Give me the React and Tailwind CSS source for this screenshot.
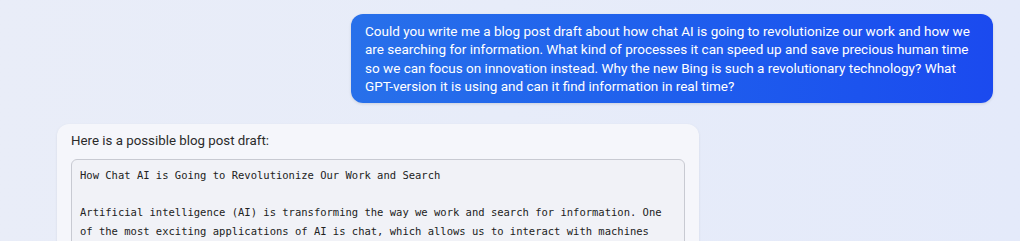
export default function App() {
  return (
    <div className="w-[1020px] h-[241px] overflow-hidden bg-gradient-to-r from-[#e9edf8] via-[#e7ecf9] to-[#e4eafa] font-['Roboto',sans-serif]">
      <div className="flex flex-col pt-[14px]">
        {/* User message */}
        <div className="self-end mr-[27px] w-[642px] rounded-[12px] bg-gradient-to-r from-[#2870ea] to-[#1b4aef] px-[14px] py-[8px] shadow-[0_1px_3px_rgba(0,0,0,0.12)]">
          <p className="text-[13.5px] leading-[18.3px] text-white">
            Could you write me a blog post draft about how chat AI is going to revolutionize our work and how we are searching for information. What kind of processes it can speed up and save precious human time so we can focus on innovation instead. Why the new Bing is such a revolutionary technology? What GPT-version it is using and can it find information in real time?
          </p>
        </div>

        {/* Bot message */}
        <div className="ml-[57px] mt-[21px] w-[642px] rounded-[12px] bg-[#f5f6fb] px-[14px] pt-[8px] pb-4 shadow-[0_1px_3px_rgba(0,0,0,0.08)]">
          <p className="text-[13.3px] leading-[18.3px] text-[#2b2b2b] mb-[9px]">Here is a possible blog post draft:</p>
          <pre className="rounded-[6px] border border-[#c8cad2] bg-[#f1f2f7] px-[8px] pt-[6px] pb-2 font-['DejaVu_Sans_Mono',monospace] text-[10.5px] leading-[18.5px] text-[#222] whitespace-pre-wrap">
{`How Chat AI is Going to Revolutionize Our Work and Search

Artificial intelligence (AI) is transforming the way we work and search for information. One of the most exciting applications of AI is chat, which allows us to interact with machines using natural language and get answers, suggestions and assistance in real time.`}
          </pre>
        </div>
      </div>
    </div>
  )
}
